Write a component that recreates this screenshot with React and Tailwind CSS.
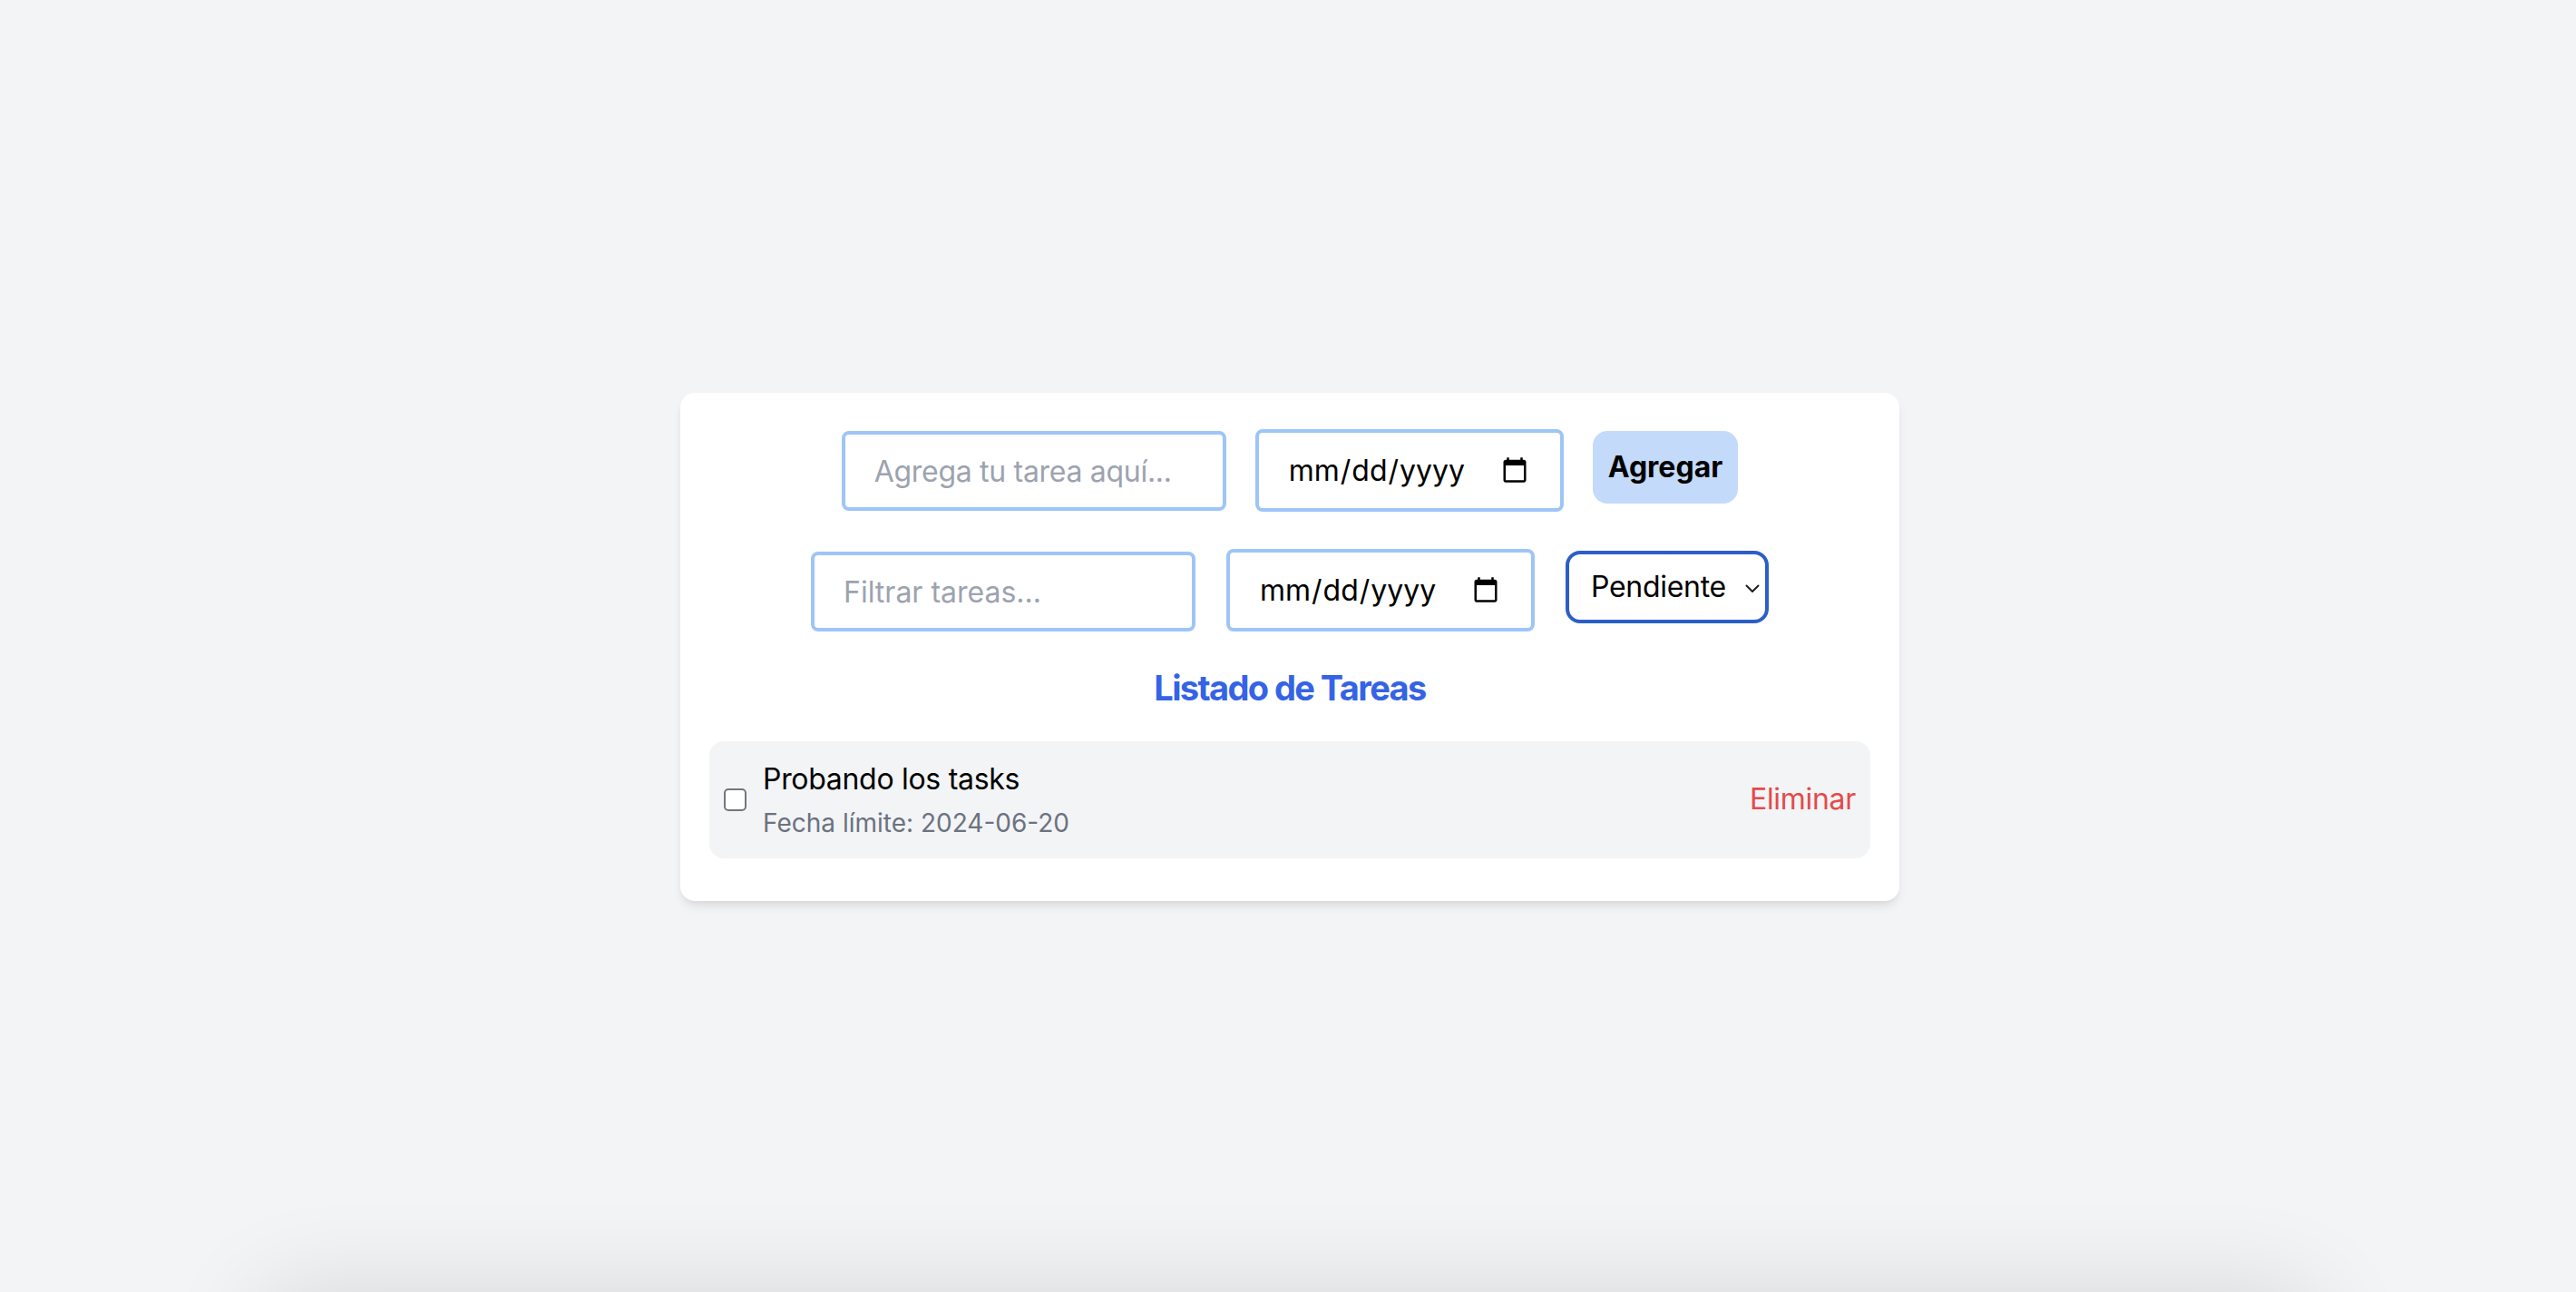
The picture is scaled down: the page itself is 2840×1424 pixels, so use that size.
import { useState } from 'react';

const font = { fontFamily: 'Inter, "Noto Sans", sans-serif' };

function Chevron() {
  return (
    <svg width="16" height="10" viewBox="0 0 16 10" fill="none" className="pointer-events-none absolute right-[10px] top-[37px]">
      <path d="M1.5 1.5 L8 8 L14.5 1.5" stroke="#1f1f1f" strokeWidth="2" strokeLinecap="round" strokeLinejoin="round" />
    </svg>
  );
}

export default function App() {
  const [tasks, setTasks] = useState([
    { id: 1, text: 'Probando los tasks', due: '2024-06-20', done: false },
  ]);
  const [status, setStatus] = useState('pendiente');

  const toggle = (id) =>
    setTasks((t) => t.map((x) => (x.id === id ? { ...x, done: !x.done } : x)));
  const remove = (id) => setTasks((t) => t.filter((x) => x.id !== id));

  return (
    <div className="h-[1424px] overflow-hidden bg-[#f3f4f6]" style={font}>
      <div className="flex h-[1424px] items-center justify-center pt-[2px] pl-[4px]">
        <div className="w-[1344px] rounded-[16px] bg-white px-[32px] pt-[40px] pb-[47px] shadow-[0_8px_12px_-2px_rgba(0,0,0,0.08),0_4px_8px_-4px_rgba(0,0,0,0.08)]">
          {/* agregar */}
          <div className="flex items-start justify-center gap-[32px]">
            <input
              type="text"
              placeholder="Agrega tu tarea aquí..."
              className="mt-[2px] h-[88px] w-[424px] rounded-[8px] border-[4px] border-[#9ec5f8] px-[32px] text-[32px] tracking-[-0.3px] text-black outline-none placeholder:text-[#9ca3af]"
            />
            <input
              type="date"
              className="h-[91px] w-[340px] rounded-[8px] border-[4px] border-[#9ec5f8] px-[32px] text-[32px] text-black outline-none"
            />
            <button className="mt-[2px] h-[80px] rounded-[16px] bg-[#c3dafa] px-[17px] text-[32px] font-bold text-black">
              Agregar
            </button>
          </div>

          {/* filtros */}
          <div className="mt-[41px] flex items-start justify-center gap-[34px]">
            <input
              type="text"
              placeholder="Filtrar tareas..."
              className="mt-[3px] h-[88px] w-[424px] rounded-[8px] border-[4px] border-[#9ec5f8] px-[32px] text-[32px] text-black outline-none placeholder:text-[#9ca3af]"
            />
            <input
              type="date"
              className="h-[91px] w-[340px] rounded-[8px] border-[4px] border-[#9ec5f8] px-[32px] text-[32px] text-black outline-none"
            />
            <div className="relative mt-[2px]">
              <select
                value={status}
                onChange={(e) => setStatus(e.target.value)}
                className="h-[80px] w-[224px] appearance-none rounded-[16px] border-[4px] border-[#2c5ec7] bg-white pl-[24px] text-[32px] tracking-[-0.3px] text-black outline-none"
              >
                <option value="todas">Todas</option>
                <option value="pendiente">Pendiente</option>
                <option value="completada">Completada</option>
              </select>
              <Chevron />
            </div>
          </div>

          <h2 className="mt-[34px] text-center text-[38px] leading-[56px] font-bold tracking-[-1.6px] text-[#3563e5]">
            Listado de Tareas
          </h2>

          <ul className="mt-[31px]">
            {tasks.map((task) => (
              <li
                key={task.id}
                className="flex items-center rounded-[16px] bg-[#f3f4f6] px-[16px] pt-[18px] pb-[19px]"
              >
                <input
                  type="checkbox"
                  checked={task.done}
                  onChange={() => toggle(task.id)}
                  className="mr-[18px] h-[25px] w-[25px] appearance-none rounded-[5px] border-[2.5px] border-[#767676] bg-white"
                />
                <div className="flex-1">
                  <p className="text-[32px] leading-[48px] tracking-[-0.3px] text-black">{task.text}</p>
                  <p className="mt-[4px] text-[28px] leading-[40px] text-[#6b7280]">
                    Fecha límite: {task.due}
                  </p>
                </div>
                <button onClick={() => remove(task.id)} className="text-[32px] tracking-[-0.3px] text-[#e34b4b]">
                  Eliminar
                </button>
              </li>
            ))}
          </ul>
        </div>
      </div>
      <div className="mx-auto h-[400px] w-[2260px] rounded-[16px] bg-white shadow-[0_0_110px_rgba(0,0,0,0.12)]" />
    </div>
  );
}
